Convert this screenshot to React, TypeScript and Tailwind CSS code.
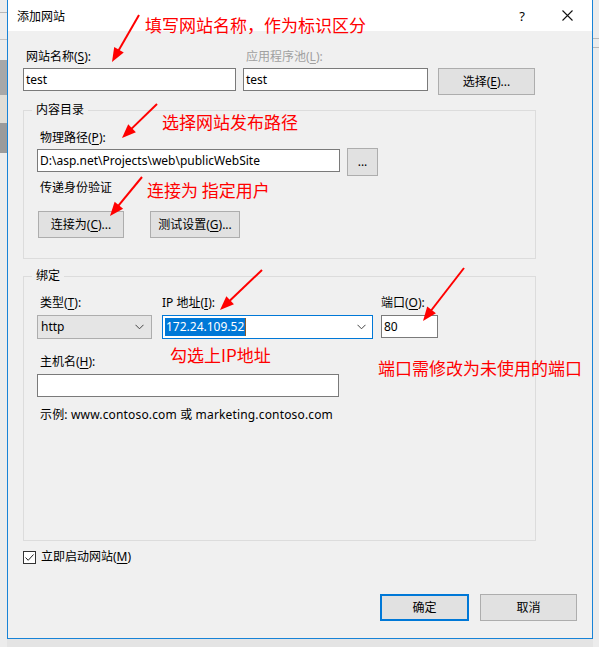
import React from "react";

const FONT = '"Noto Sans", "Noto Sans CJK SC", sans-serif';
const CJK = '"Noto Sans CJK SC", sans-serif';

function Btn({ children, w, h = 27, primary = false }: { children: React.ReactNode; w: number; h?: number; primary?: boolean }) {
  return (
    <div
      className={
        "flex items-center justify-center bg-[#e1e1e1] text-[12px] leading-[16px] text-black " +
        (primary ? "border-2 border-[#0078d7]" : "border border-[#adadad]")
      }
      style={{ width: w, height: h }}
    >
      {children}
    </div>
  );
}

function U({ c }: { c: string }) {
  return <span className="underline underline-offset-2">{c}</span>;
}

const arrows: [number, number, number, number][] = [
  [139, 15, 112, 62],
  [157, 104, 122, 138],
  [142, 177, 110, 216],
  [262, 270, 220, 310],
  [464, 268, 423, 321],
];

function Arrow({ a }: { a: [number, number, number, number] }) {
  const [x1, y1, x2, y2] = a;
  const dx = x2 - x1;
  const dy = y2 - y1;
  const l = Math.hypot(dx, dy);
  const ux = dx / l;
  const uy = dy / l;
  const hl = 14;
  const hw = 5.5;
  const bx = x2 - ux * hl;
  const by = y2 - uy * hl;
  const nx = -uy;
  const ny = ux;
  const pts = `${x2},${y2} ${bx + nx * hw},${by + ny * hw} ${bx - nx * hw},${by - ny * hw}`;
  return (
    <g>
      <line x1={x1} y1={y1} x2={bx + ux * 2} y2={by + uy * 2} stroke="#ff0000" strokeWidth={2} />
      <polygon points={pts} fill="#ff0000" />
    </g>
  );
}

export default function App() {
  return (
    <div className="relative w-[599px] h-[647px] overflow-hidden bg-[#e4e4e4] flex" style={{ fontFamily: FONT }}>
      {/* left background strip */}
      <div className="w-[7px] h-full flex flex-col bg-[#ececec]">
        <div className="h-[12px]" />
        <div className="h-[1px] bg-[#b8b8b8]" />
        <div className="h-[26px]" />
        <div className="h-[1px] bg-[#c4c4c4]" />
        <div className="h-[20px]" />
        <div className="h-[35px] bg-[#a8a8a8]" />
        <div className="h-[28px] bg-[#e0ddd6]" />
        <div className="h-[30px] bg-[#9b9b9b]" />
        <div className="flex-1" />
      </div>
      {/* dialog */}
      <div className="w-[586px] h-[639px] border-x border-b border-[#1883d7] bg-[#f0f0f0] flex flex-col text-[12px] leading-[16px] text-black">
        {/* title bar */}
        <div className="h-[31px] bg-white flex items-center justify-between pl-[9px] pr-[19px]" style={{ fontFamily: CJK }}>
          <span className="text-[12px]">添加网站</span>
          <div className="flex items-center">
            <span className="text-[13px] mr-[37px]" style={{ fontFamily: FONT }}>?</span>
            <svg width="11" height="11" viewBox="0 0 11 11">
              <path d="M0.5 0.5 L10.5 10.5 M10.5 0.5 L0.5 10.5" stroke="#111" strokeWidth="1.1" />
            </svg>
          </div>
        </div>

        <div className="flex flex-col pl-[15px]">
          {/* row 1 */}
          <div className="flex items-start mt-[18px]">
            <div className="flex flex-col w-[213px]">
              <span className="pl-[3px]">网站名称(<U c="S" />):</span>
              <div className="mt-[3px] h-[23px] bg-white border border-[#7a7a7a] flex items-center pl-[2px]">test</div>
            </div>
            <div className="flex flex-col w-[185px] ml-[7px]">
              <span className="pl-[3px] text-[#a0a0a0]">应用程序池(<U c="L" />):</span>
              <div className="mt-[3px] h-[23px] bg-white border border-[#7a7a7a] flex items-center pl-[2px]">test</div>
            </div>
            <div className="ml-[10px] mt-[19px]">
              <Btn w={97}>
                选择(<U c="E" />)...
              </Btn>
            </div>
          </div>

          {/* group 1 */}
          <div className="mt-[15px] w-[513px] h-[149px] border border-[#dcdcdc] flex flex-col pl-[13px]">
            <span className="-mt-[9px] ml-[-5px] w-fit bg-[#f0f0f0] px-[4px]">内容目录</span>
            <span className="mt-[12px] pl-[3px]">物理路径(<U c="P" />):</span>
            <div className="flex items-start mt-[3px]">
              <div className="w-[303px] h-[23px] bg-white border border-[#7a7a7a] flex items-center pl-[2px]">
                D:\asp.net\Projects\web\publicWebSite
              </div>
              <div className="ml-[7px] -mt-[1px]">
                <Btn w={31} h={28}>
                  ...
                </Btn>
              </div>
            </div>
            <span className="mt-[4px] pl-[3px]">传递身份验证</span>
            <div className="flex mt-[15px] ml-[1px]">
              <Btn w={86}>
                连接为(<U c="C" />)...
              </Btn>
              <div className="ml-[26px]">
                <Btn w={90}>
                  测试设置(<U c="G" />)...
                </Btn>
              </div>
            </div>
          </div>

          {/* group 2 */}
          <div className="mt-[17px] w-[513px] h-[265px] border border-[#dcdcdc] flex flex-col pl-[13px]">
            <span className="-mt-[9px] ml-[-5px] w-fit bg-[#f0f0f0] px-[4px]">绑定</span>
            <div className="flex items-start mt-[11px]">
              <div className="flex flex-col w-[115px]">
                <span className="pl-[3px]">类型(<U c="T" />):</span>
                <div className="mt-[4px] h-[24px] bg-[#e5e5e5] border border-[#adadad] flex items-center justify-between pl-[3px] pr-[7px]">
                  <span>http</span>
                  <svg width="9" height="6" viewBox="0 0 9 6">
                    <path d="M0.5 0.8 L4.5 4.8 L8.5 0.8" stroke="#444" strokeWidth="1" fill="none" />
                  </svg>
                </div>
              </div>
              <div className="flex flex-col w-[211px] ml-[10px]">
                <span>IP 地址(<U c="I" />):</span>
                <div className="mt-[4px] h-[24px] bg-white border border-[#0078d7] flex items-center justify-between pl-[2px] pr-[6px]">
                  <span className="flex items-center">
                    <span className="bg-[#0078d7] text-white px-[1px] h-[18px] flex items-center">172.24.109.52</span>
                    <span className="w-[1px] h-[18px] bg-[#8a5a2a]" />
                  </span>
                  <svg width="9" height="6" viewBox="0 0 9 6">
                    <path d="M0.5 0.8 L4.5 4.8 L8.5 0.8" stroke="#444" strokeWidth="1" fill="none" />
                  </svg>
                </div>
              </div>
              <div className="flex flex-col w-[57px] ml-[8px]">
                <span>端口(<U c="O" />):</span>
                <div className="mt-[4px] h-[23px] bg-white border border-[#7a7a7a] flex items-center pl-[2px]">80</div>
              </div>
            </div>
            <span className="mt-[15px] pl-[3px]">主机名(<U c="H" />):</span>
            <div className="mt-[4px] w-[302px] h-[23px] bg-white border border-[#7a7a7a]" />
            <span className="mt-[10px] pl-[3px] tracking-[0.16px]">示例: www.contoso.com 或 marketing.contoso.com</span>
          </div>

          {/* checkbox */}
          <div className="flex items-center mt-[8px]">
            <div className="w-[13px] h-[13px] border border-[#333] bg-white flex items-center justify-center">
              <svg width="11" height="11" viewBox="0 0 11 11">
                <path d="M1.5 5.5 L4.2 8.3 L9.5 2.5" stroke="#222" strokeWidth="1" fill="none" />
              </svg>
            </div>
            <span className="ml-[5px]">立即启动网站(<U c="M" />)</span>
          </div>
        </div>

        {/* bottom buttons */}
        <div className="flex justify-end pr-[15px] mt-[29px]">
          <Btn w={89} primary>
            确定
          </Btn>
          <div className="ml-[11px]">
            <Btn w={97}>取消</Btn>
          </div>
        </div>
      </div>
      {/* right background strip */}
      <div className="flex-1 h-full flex flex-col bg-[#ececec]">
        <div className="h-[38px]" />
        <div className="h-[1px] bg-[#b8b8b8]" />
        <div className="h-[8px]" />
        <div className="h-[1px] bg-[#b8b8b8]" />
        <div className="flex-1" />
      </div>

      {/* red annotations (overlay) */}
      <div className="absolute inset-0 pointer-events-none text-[#ff0000] text-[17px] leading-[17px]" style={{ fontFamily: CJK }}>
        <span className="absolute left-[145px] top-[16px] whitespace-nowrap">填写网站名称，作为标识区分</span>
        <span className="absolute left-[162px] top-[113px] whitespace-nowrap">选择网站发布路径</span>
        <span className="absolute left-[147px] top-[181px] whitespace-nowrap">连接为 指定用户</span>
        <span className="absolute left-[170px] top-[346px] whitespace-nowrap">勾选上IP地址</span>
        <span className="absolute left-[378px] top-[359px] whitespace-nowrap">端口需修改为未使用的端口</span>
        <svg className="absolute inset-0" width="599" height="647" viewBox="0 0 599 647">
          {arrows.map((a, i) => (
            <Arrow key={i} a={a} />
          ))}
        </svg>
      </div>
    </div>
  );
}
